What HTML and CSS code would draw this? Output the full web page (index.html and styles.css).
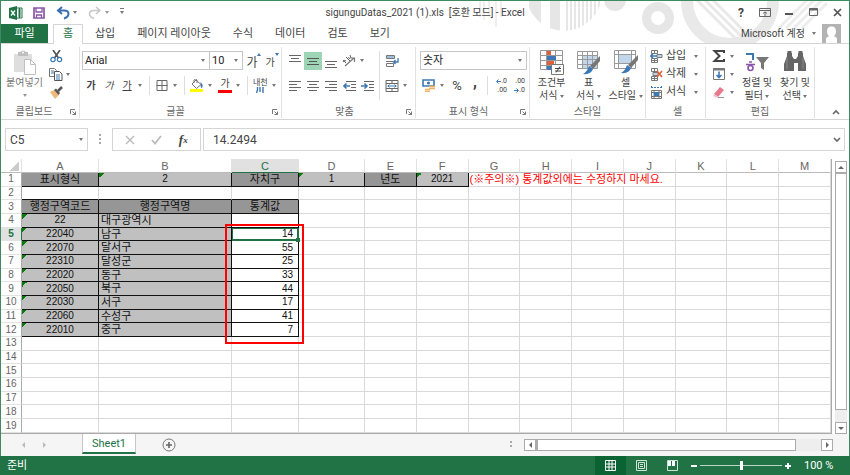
FILE: index.html
```html
<!DOCTYPE html>
<html lang="ko">
<head>
<meta charset="utf-8">
<title>sigunguDatas_2021 (1).xls - Excel</title>
<link rel="stylesheet" href="styles.css">
</head>
<body>
<div class="window">
  <header class="top">
    <svg class="decor" width="370" height="42" viewBox="480 1 370 42" aria-hidden="true">
      <defs>
        <clipPath id="disc"><circle cx="565" cy="-7" r="38"/></clipPath>
        <clipPath id="ring"><circle cx="731" cy="1" r="39"/></clipPath>
      </defs>
      <path d="M481 0v17M485 0v20M490 0v16M497 0v27M502 0v17" stroke="#efefef" stroke-width="2"/>
      <g clip-path="url(#disc)" fill="#e6e6e6"><path d="M530 0h12v40h-12zM551 0h10v40h-10zM567 0h2v40h-2zM571 0h2v40h-2zM575 0h2v40h-2zM579 0h2v40h-2zM583 0h2v40h-2zM587 0h2v40h-2zM591 0h2v40h-2zM595 0h2v40h-2zM599 0h2v40h-2z"/></g>
      <circle cx="616" cy="0" r="11" fill="#e6e6e6"/>
      <circle cx="659" cy="18" r="11.500" fill="none" stroke="#e6e6e6" stroke-width="9"/>
      <circle cx="731" cy="1" r="43" fill="none" stroke="#e9e9e9" stroke-width="12"/>
      <g clip-path="url(#ring)"><path d="M690 -8l60 60M698 -8l60 60M706 -8l60 60" stroke="#e9e9e9" stroke-width="3"/></g>
      <path d="M787 28l28-28M795 28l28-28M803 28l25-25M780 28l28-28" stroke="#ededed" stroke-width="3"/>
    </svg>
    <div class="titlebar">
      <div class="quick">
        <svg width="14" height="14" viewBox="0 0 14 14"><path d="M0 2l8-2v14l-8-2z" fill="#217346"/><path d="M8 2h5v10H8M9 4h3M9 6h3M9 8h3M9 10h3M10.500 2v10" fill="none" stroke="#217346"/><path d="M2 4.500l4 5M6 4.500l-4 5" stroke="#fff" stroke-width="1.300"/></svg>
        <button class="save" aria-label="저장"><svg width="12" height="12" viewBox="0 0 12 12"><path d="M1 1h10v10H1z" fill="#fff" stroke="#8a55a8" stroke-width="1.700"/><path d="M3 1v4h6V1M3.500 11V8h5v3" fill="none" stroke="#8a55a8" stroke-width="1.300"/></svg></button>
        <button class="split" aria-label="실행 취소"><svg width="14" height="14" viewBox="0 0 14 14"><path d="M6 1L2 4.500L6 8M2 4.500h6c6 0 6 6 0 8" fill="none" stroke="#3b6fb0" stroke-width="2"/></svg><i class="caret"></i></button>
        <button class="split off" aria-label="다시 실행"><svg width="14" height="14" viewBox="0 0 14 14"><path d="M8 1l4 3.500L8 8M12 4.500H6c-6 0-6 6 0 8" fill="none" stroke="#b5b5b5" stroke-width="1.500"/></svg><i class="caret"></i></button>
        <button class="custom" aria-label="빠른 실행 도구 모음 사용자 지정"><i class="caret lined"></i></button>
      </div>
      <h1>sigunguDatas_2021 (1).xls&nbsp; [호환 모드] - Excel</h1>
      <div class="winbtns">
        <button aria-label="도움말" class="help">?</button>
        <button aria-label="리본 메뉴 표시 옵션"><svg width="12" height="10" viewBox="0 0 12 10"><path d="M.5.5h11v8H.5zM.5 2.500h11M6 8V4M4 5.500L6 3.800l2 1.700" fill="none" stroke="#666"/></svg></button>
        <button aria-label="최소화"><svg width="8" height="10" viewBox="0 0 8 10"><path d="M0 6h8" stroke="#555" stroke-width="2"/></svg></button>
        <button aria-label="최대화"><svg width="9" height="9" viewBox="0 0 9 9"><path d="M.5.5h8v7h-8z" fill="none" stroke="#666"/><path d="M0 1.500h9" stroke="#666" stroke-width="2"/></svg></button>
        <button aria-label="닫기"><svg width="9" height="9" viewBox="0 0 9 9"><path d="M1 1l7 7M8 1L1 8" stroke="#555" stroke-width="1.700"/></svg></button>
      </div>
    </div>
    <nav class="tabs">
      <a href="#" class="file">파일</a>
      <a href="#" class="active">홈</a>
      <a href="#">삽입</a>
      <a href="#">페이지 레이아웃</a>
      <a href="#">수식</a>
      <a href="#">데이터</a>
      <a href="#">검토</a>
      <a href="#">보기</a>
      <button class="account">Microsoft 계정 <i class="caret"></i></button>
      <svg class="avatar" width="19" height="19" viewBox="0 0 19 19"><path d="M0 0h19v19H0z" fill="#b3b3b3"/><path d="M4 19v-4q0-2 3-2.500q-2-2-2-5q0-5 4.500-5t4.500 5q0 3-2 5q3 .5 3 2.500v4z" fill="#fff"/></svg>
    </nav>
  </header>

  <section class="ribbon" aria-label="홈">
    <div class="group clipboard">
      <div class="body">
        <button class="big off"><svg width="24" height="26" viewBox="0 0 24 26"><path d="M1 4h18v18H1z" fill="#d3d3d3"/><path d="M5 2h2q3-3 6 0h2v4H5z" fill="#aaa"/><circle cx="10" cy="2.500" r="1" fill="#fff"/><path d="M11.500 9.500h6l5 5v10h-11z" fill="#fff" stroke="#aaa"/><path d="M17.500 9.500v5h5" fill="none" stroke="#aaa"/></svg><span>붙여넣기</span><i class="caret"></i></button>
        <div class="stack">
          <button class="ib" aria-label="잘라내기"><svg width="13" height="13" viewBox="0 0 13 13"><path d="M3 0l5.500 8M10 0L4.500 8" stroke="#555" stroke-width="1.700"/><circle cx="3" cy="9.500" r="2.200" fill="none" stroke="#3c78b5" stroke-width="1.200"/><circle cx="9.500" cy="9.500" r="2.200" fill="none" stroke="#3c78b5" stroke-width="1.200"/></svg></button>
          <button class="ib dd" aria-label="복사"><svg width="14" height="13" viewBox="0 0 14 13"><path d="M.5.5h5l2 2v6h-7z" fill="#fff" stroke="#777"/><path d="M5.500 3.500h5l2.500 2.500v6.500H5.500z" fill="#fff" stroke="#555"/><path d="M2 3h3M2 5h3M7 7h4M7 9h4M7 11h4" stroke="#3c78b5"/></svg><i class="caret"></i></button>
          <button class="ib" aria-label="서식 복사"><svg width="13" height="13" viewBox="0 0 13 13"><path d="M0 6l4-2 5 5-4 4z" fill="#f0b878"/><path d="M4 4l2-1.500 4 4.500L8.500 9z" fill="#555"/><path d="M8 5l4-4" stroke="#555" stroke-width="2.500"/></svg></button>
        </div>
      </div>
      <footer>클립보드<svg class="launch" width="6" height="6" viewBox="0 0 6 6"><path d="M.5 5V.5H5M2.500 2.500l3 3M5.500 2.500v3h-3" fill="none" stroke="#777"/></svg></footer>
    </div>

    <div class="group font">
      <div class="body rows">
        <div class="row">
          <span class="combo face"><select aria-label="글꼴"><option>Arial</option></select><i class="caret"></i></span>
          <span class="combo size"><select aria-label="글꼴 크기"><option>10</option></select><i class="caret"></i></span>
          <button class="ib txt" aria-label="글꼴 크기 크게"><span class="ga large">가</span><i class="mark up"></i></button>
          <button class="ib txt" aria-label="글꼴 크기 작게"><span class="ga">가</span><i class="mark"></i></button>
        </div>
        <div class="row">
          <button class="ib" aria-label="굵게"><b>가</b></button>
          <button class="ib" aria-label="기울임꼴"><em>가</em></button>
          <button class="ib dd" aria-label="밑줄"><u>가</u><i class="caret"></i></button>
          <i class="sep"></i>
          <button class="ib dd" aria-label="테두리"><svg width="11" height="11" viewBox="0 0 11 11"><path d="M.5.5h10v10H.5zM5.500 0v11M0 5.500h11" fill="none" stroke="#666"/></svg><i class="caret"></i></button>
          <i class="sep"></i>
          <button class="ib dd" aria-label="채우기 색"><svg width="14" height="14" viewBox="0 0 14 14"><path d="M0 10h13v3H0z" fill="#ff0"/><path d="M2 5l4-4 5 4.500-4.500 4z" fill="#fff" stroke="#777"/><path d="M4 4V1q1.500-2 3 0v3" fill="none" stroke="#777"/><path d="M10 3q4 2 2 6q-2 0-1-4z" fill="#3c78b5"/></svg><i class="caret"></i></button>
          <button class="ib dd" aria-label="글꼴 색"><span class="fontcolor">가</span><i class="caret"></i></button>
          <i class="sep"></i>
          <button class="ib dd" aria-label="윗주 필드"><span class="ruby">내천<svg width="8" height="6" viewBox="0 0 8 6"><path d="M1.500 0v3L.5 6M4 0v5M7 0v6" fill="none" stroke="#3c78b5" stroke-width="1.400"/></svg></span><i class="caret"></i></button>
        </div>
      </div>
      <footer>글꼴<svg class="launch" width="6" height="6" viewBox="0 0 6 6"><path d="M.5 5V.5H5M2.500 2.500l3 3M5.500 2.500v3h-3" fill="none" stroke="#777"/></svg></footer>
    </div>

    <div class="group align">
      <div class="body">
        <div class="rows">
          <div class="row">
            <button class="ib" aria-label="위쪽 맞춤"><svg width="12" height="14" viewBox="0 0 12 14"><path d="M0 1.500h12M2 4.500h8M0 7.500h12" stroke="#666"/></svg></button>
            <button class="ib on" aria-label="가운데 맞춤"><svg width="12" height="14" viewBox="0 0 12 14"><path d="M0 4.500h12M2 7.500h8M0 10.500h12" stroke="#555"/></svg></button>
            <button class="ib" aria-label="아래쪽 맞춤"><svg width="12" height="14" viewBox="0 0 12 14"><path d="M0 7.500h12M2 10.500h8M0 13.500h12" stroke="#666"/></svg></button>
            <button class="ib dd" aria-label="방향"><svg width="14" height="13" viewBox="0 0 14 13"><path d="M3 12l9-8M8.500 4H12.500v4" fill="none" stroke="#777" stroke-width="1.200"/><path d="M1 6l3 3M1 8q1-3 3-1M4 3l4 4M5 5q2-3 3 0M8 1l1 3" fill="none" stroke="#666"/></svg><i class="caret"></i></button>
          </div>
          <div class="row">
            <button class="ib" aria-label="왼쪽 맞춤"><svg width="12" height="10" viewBox="0 0 12 10"><path d="M0 .5h12M0 3.500h8M0 6.500h12M0 9.500h8" stroke="#666"/></svg></button>
            <button class="ib" aria-label="가로 가운데 맞춤"><svg width="12" height="10" viewBox="0 0 12 10"><path d="M0 .5h12M2 3.500h8M0 6.500h12M2 9.500h8" stroke="#666"/></svg></button>
            <button class="ib" aria-label="오른쪽 맞춤"><svg width="12" height="10" viewBox="0 0 12 10"><path d="M0 .5h12M4 3.500h8M0 6.500h12M4 9.500h8" stroke="#666"/></svg></button>
            <button class="ib" aria-label="내어쓰기"><svg width="13" height="10" viewBox="0 0 13 10"><path d="M3 .5h10M8 3.500h5M8 6.500h5M3 9.500h10" stroke="#666"/><path d="M7 5H1M3.500 2.500L1 5l2.500 2.500" fill="none" stroke="#3c78b5" stroke-width="1.600"/></svg></button>
            <button class="ib" aria-label="들여쓰기"><svg width="13" height="10" viewBox="0 0 13 10"><path d="M3 .5h10M8 3.500h5M8 6.500h5M3 9.500h10" stroke="#666"/><path d="M0 5h6M3.500 2.500L6 5L3.500 7.500" fill="none" stroke="#3c78b5" stroke-width="1.600"/></svg></button>
          </div>
        </div>
        <i class="sep"></i>
        <div class="rows">
          <div class="row"><button class="ib" aria-label="텍스트 줄 바꿈"><svg width="13" height="12" viewBox="0 0 13 12"><path d="M.5.5h8v3h-8zM0 6.500h7M.5 8.500h7v3h-7z" fill="none" stroke="#777"/><path d="M1 2h7" stroke="#3c78b5"/><path d="M12 3v4H7.500M9.500 5l-2 2 2 2" fill="none" stroke="#3c78b5" stroke-width="1.300"/></svg></button></div>
          <div class="row"><button class="ib dd" aria-label="병합하고 가운데 맞춤"><svg width="13" height="12" viewBox="0 0 13 12"><path d="M.5.500h12v11H.5zM.5 3.500h12M.5 8.500h12M6.500 0v3M6.500 9v3" fill="none" stroke="#666"/><path d="M2 6h9M4 4.500L2.500 6L4 7.500M9 4.500L10.500 6L9 7.500" fill="none" stroke="#3c78b5"/></svg><i class="caret"></i></button></div>
        </div>
      </div>
      <footer>맞춤<svg class="launch" width="6" height="6" viewBox="0 0 6 6"><path d="M.5 5V.5H5M2.500 2.500l3 3M5.500 2.500v3h-3" fill="none" stroke="#777"/></svg></footer>
    </div>

    <div class="group number">
      <div class="body rows">
        <div class="row"><span class="combo format"><select aria-label="표시 형식"><option>숫자</option></select><i class="caret"></i></span></div>
        <div class="row">
          <button class="ib dd" aria-label="회계 표시 형식"><svg width="14" height="13" viewBox="0 0 14 13"><path d="M1 1h11v6H1z" fill="#fff" stroke="#3c78b5" stroke-width="1.600"/><circle cx="6.500" cy="4" r="1.600" fill="#3c78b5"/><path d="M7 7.500h6M7 9.500h6M3 10.500h5M3 12.500h5" stroke="#eeb062" stroke-width="1.500"/></svg><i class="caret"></i></button>
          <button class="ib percent" aria-label="백분율 스타일">%</button>
          <button class="ib comma" aria-label="쉼표 스타일">,</button>
          <i class="sep"></i>
          <button class="ib dec" aria-label="자릿수 늘림"><span><svg width="5" height="5" viewBox="0 0 5 5"><path d="M5 2.500H1M2.500.5l-2 2 2 2" fill="none" stroke="#3c78b5"/></svg>.0</span><span>.00</span></button>
          <button class="ib dec" aria-label="자릿수 줄임"><span>.00</span><span><svg width="5" height="5" viewBox="0 0 5 5"><path d="M0 2.500h4M2.500.5l2 2-2 2" fill="none" stroke="#3c78b5"/></svg>.0</span></button>
        </div>
      </div>
      <footer>표시 형식<svg class="launch" width="6" height="6" viewBox="0 0 6 6"><path d="M.5 5V.5H5M2.500 2.500l3 3M5.500 2.500v3h-3" fill="none" stroke="#777"/></svg></footer>
    </div>

    <div class="group styles">
      <div class="body">
        <button class="big"><svg width="26" height="26" viewBox="0 0 26 26"><path d="M1.500.5h22v19h-22zM1.500 5.500h22M1.500 10.500h22M1.500 15.500h22M7.500 0v20M16.500 0v20" fill="#fff" stroke="#999"/><path d="M8 1h4v4H8zM8 11h7v4H8z" fill="#e0603a"/><path d="M8 6h9v4H8zM8 16h4v4H8z" fill="#3c78b5"/><path d="M12.500 14.500h12v10h-12z" fill="#fff" stroke="#777"/><path d="M16 18.500h6M16 21h6M21 16.500l-4 6" stroke="#444"/></svg><span>조건부<br>서식 <i class="caret"></i></span></button>
        <button class="big"><svg width="26" height="26" viewBox="0 0 26 26"><path d="M1.500 1.500h20v17h-20z" fill="#fff" stroke="#999"/><path d="M7 6h14v12H7z" fill="#c3d7ec"/><path d="M1.500 5.500h20M1.500 9.500h20M1.500 14.500h20M6.500 1v17M11.500 1v17M16.500 1v17" stroke="#999"/><path d="M24 6v5l-7 8-3-3z" fill="#777"/><path d="M13 16l4 3q-2 6-10 5q4-2 6-8z" fill="#3c78b5"/></svg><span>표<br>서식 <i class="caret"></i></span></button>
        <button class="big"><svg width="26" height="26" viewBox="0 0 26 26"><path d="M1.500.5h21v18h-21z" fill="#fff" stroke="#999"/><path d="M1.500 4.500h21M1.500 13.500h21M5.500 0v18M18.500 0v18" stroke="#999"/><path d="M6 5h12v8H6z" fill="#c3d7ec"/><path d="M25 5v5l-7 8-3-3z" fill="#777"/><path d="M14 15l4 3q-2 6-10 5q4-2 6-8z" fill="#3c78b5"/></svg><span>셀<br>스타일 <i class="caret"></i></span></button>
      </div>
      <footer>스타일</footer>
    </div>

    <div class="group cells">
      <div class="body stack">
        <button class="line"><svg width="13" height="13" viewBox="0 0 13 13"><path d="M1.500.5h6v3h-6zM4.500 0v3M1.500 8.500h6v4h-6zM4.500 8v5M1 10.500h7" fill="none" stroke="#777"/><path d="M7 4.500h5v3H7z" fill="#c3d7ec" stroke="#777"/><path d="M7 6H1M3 3.500L.800 6L3 8.500" fill="none" stroke="#3c78b5" stroke-width="1.600"/></svg><span>삽입</span><i class="caret"></i></button>
        <button class="line"><svg width="13" height="13" viewBox="0 0 13 13"><path d="M1.500.5h6v3h-6zM4.500 0v3M1.500 8.500h6v4h-6zM4.500 8v5M1 10.500h7" fill="none" stroke="#777"/><path d="M3 4.500h5v3H3z" fill="#c3d7ec" stroke="#777"/><path d="M7 3l5 6M12 3L7 9" stroke="#e0603a" stroke-width="1.600"/></svg><span>삭제</span><i class="caret"></i></button>
        <button class="line"><svg width="13" height="13" viewBox="0 0 13 13"><path d="M1 1.500h11M1.500 0v3M11.500 0v3" stroke="#3c78b5" stroke-dasharray="2 1"/><path d="M1.500 4.500h10v8h-10zM1 6.500h11M1 10.500h11M4 4v9M9 4v9" fill="none" stroke="#777"/><path d="M4 6h5v4H4z" fill="#3c78b5"/></svg><span>서식</span><i class="caret"></i></button>
      </div>
      <footer>셀</footer>
    </div>

    <div class="group edit">
      <div class="body">
        <div class="stack">
          <button class="ib dd" aria-label="자동 합계"><svg width="14" height="12" viewBox="0 0 14 12"><path d="M12 3V1H2.500l5 5-5 5H12V9" fill="none" stroke="#444" stroke-width="2"/></svg><i class="caret"></i></button>
          <button class="ib dd" aria-label="채우기"><svg width="12" height="12" viewBox="0 0 12 12"><path d="M.5.5h11v11H.5z" fill="#fff" stroke="#777"/><path d="M0 1.500h12" stroke="#777" stroke-width="2"/><path d="M6 3.500v6M3.500 7L6 9.500L8.500 7" fill="none" stroke="#3c78b5" stroke-width="1.600"/></svg><i class="caret"></i></button>
          <button class="ib dd" aria-label="지우기"><svg width="12" height="12" viewBox="0 0 12 12"><path d="M1 8l6-7 4 3-6 7z" fill="#e8788c"/><path d="M1 8l4 3-1 1-4-2z" fill="#f4c0ca"/><path d="M5 11.500h6" stroke="#999"/></svg><i class="caret"></i></button>
        </div>
        <button class="big"><svg width="24" height="26" viewBox="0 0 24 26"><path d="M1 4h7v6" fill="none" stroke="#3c78b5" stroke-width="2"/><path d="M1 14.500h9M4 12h3" stroke="#8a55a8" stroke-width="1.600"/><circle cx="5.500" cy="18" r="2.500" fill="none" stroke="#8a55a8" stroke-width="1.600"/><path d="M11 7h13l-5 6v7l-3-2v-5z" fill="#777"/></svg><span>정렬 및<br>필터 <i class="caret"></i></span></button>
        <button class="big"><svg width="22" height="26" viewBox="0 0 22 26"><path d="M3 6V3h5v3l2 3h2l2-3V3h5v3l3 8v7h-8v-8h-4v8H0v-7z" fill="#666"/><path d="M4.500 3V2h2v1M15.500 3V2h2v1M9.500 10h3" stroke="#666" stroke-width="2" fill="none"/><path d="M3 8v11M19 8v11" stroke="#888"/></svg><span>찾기 및<br>선택 <i class="caret"></i></span></button>
      </div>
      <footer>편집</footer>
    </div>
    <button class="collapse" aria-label="리본 메뉴 축소"><svg width="8" height="6" viewBox="0 0 8 6"><path d="M1 5l3-3 3 3" fill="none" stroke="#666" stroke-width="1.600"/></svg></button>
  </section>

  <section class="formula">
    <div class="namebox"><input aria-label="이름 상자" value="C5"><i class="caret"></i></div>
    <i class="dots"></i>
    <div class="fx">
      <button aria-label="취소"><svg width="10" height="10" viewBox="0 0 10 10"><path d="M1 1l8 8M9 1L1 9" stroke="#bbb" stroke-width="1.400"/></svg></button>
      <button aria-label="입력"><svg width="11" height="10" viewBox="0 0 11 10"><path d="M1 5l3 3.500L10 1" fill="none" stroke="#bbb" stroke-width="1.800"/></svg></button>
      <button aria-label="함수 삽입" class="fn">f<small>x</small></button>
    </div>
    <div class="value"><input aria-label="수식 입력줄" value="14.2494"><svg width="8" height="6" viewBox="0 0 8 6"><path d="M1 1l3 3 3-3" fill="none" stroke="#666" stroke-width="1.600"/></svg></div>
  </section>

  <main class="sheet">
    <div class="gridwrap">
      <table class="grid">
        <colgroup><col class="c-row"><col class="c-a"><col class="c-b"><col class="c-c"><col class="c-d"><col><col><col><col><col><col><col><col><col></colgroup>
        <thead><tr id="letters"></tr></thead>
        <tbody id="cells"></tbody>
      </table>
    </div>
    <div class="vscroll"><button aria-label="위로"><i class="tri up"></i></button><div class="thumb"></div><div class="track"></div><button aria-label="아래로"><i class="tri down"></i></button></div>
  </main>

  <div class="sheetbar">
    <div class="sheetnav"><button aria-label="이전 시트"><i class="tri left"></i></button><button aria-label="다음 시트"><i class="tri right"></i></button></div>
    <a href="#" class="sheettab">Sheet1</a>
    <button class="add" aria-label="새 시트"><svg width="14" height="14" viewBox="0 0 14 14"><circle cx="7" cy="7" r="6" fill="none" stroke="#777"/><path d="M7 4v6M4 7h6" stroke="#666" stroke-width="1.600"/></svg></button>
    <i class="dots"></i>
    <div class="hscroll"><button aria-label="왼쪽으로"><i class="tri left"></i></button><div class="thumb"></div><div class="track"></div><button aria-label="오른쪽으로"><i class="tri right"></i></button></div>
  </div>

  <footer class="status">
    <span class="ready">준비</span>
    <button class="view on" aria-label="기본"><svg width="11" height="11" viewBox="0 0 11 11"><path d="M.5.5h10v10H.5zM4 0v11M7 0v11M0 4h11M0 7h11" fill="none" stroke="#fff"/></svg></button>
    <button class="view" aria-label="페이지 레이아웃"><svg width="11" height="11" viewBox="0 0 11 11"><path d="M.5.5h10v10H.5zM2.500 2.500h6v6h-6zM4 4.500h3M4 6.500h3" fill="none" stroke="#cfe3d7"/></svg></button>
    <button class="view" aria-label="페이지 나누기 미리 보기"><svg width="11" height="11" viewBox="0 0 11 11"><path d="M.5.5h10v10H.5z" fill="none" stroke="#cfe3d7"/><path d="M1 1h3v5H1zM5 1h3v5H5z" fill="#fff"/></svg></button>
    <button class="zoom" aria-label="축소"><svg width="6" height="8" viewBox="0 0 6 8"><path d="M0 4h6" stroke="#fff" stroke-width="2"/></svg></button>
    <input type="range" min="0" max="100" value="50" aria-label="확대/축소">
    <button class="zoom" aria-label="확대"><svg width="8" height="8" viewBox="0 0 8 8"><path d="M1 4h6M4 1v6" stroke="#fff" stroke-width="2"/></svg></button>
    <span class="pct">100 %</span>
  </footer>
</div>
<script src="grid.js"></script>
</body>
</html>
```
FILE: grid.js
```js
const letters = 'ABCDEFGHIJKLM'.split('');
const regions = [
  ['22', '대구광역시', ''], ['22040', '남구', '14'], ['22070', '달서구', '55'],
  ['22310', '달성군', '25'], ['22020', '동구', '33'], ['22050', '북구', '44'],
  ['22030', '서구', '17'], ['22060', '수성구', '41'], ['22010', '중구', '7']
];
const cells = {
  A1: ['표시형식', 'head'], B1: ['2', 'fill flag'], C1: ['자치구', 'head'],
  D1: ['1', 'fill flag'], E1: ['년도', 'head'], F1: ['2021', 'fill flag'],
  G1: ['(※주의※) 통계값외에는 수정하지 마세요.', 'note'],
  A2: ['', 'under'], B2: ['', 'under'], C2: ['', 'under'],
  A3: ['행정구역코드', 'head'], B3: ['행정구역명', 'head'], C3: ['통계값', 'head']
};
regions.forEach(([code, name, value], i) => {
  const r = i + 4;
  cells['A' + r] = [code, 'fill flag'];
  cells['B' + r] = [name, 'fill name'];
  cells['C' + r] = [value, 'num'];
});
cells.C5[1] += ' selected';

const headRow = document.getElementById('letters');
headRow.innerHTML = '<th class="corner"></th>' + letters.map(l =>
  `<th scope="col"${l === 'C' ? ' class="current"' : ''}>${l}</th>`).join('');

let html = '';
for (let r = 1; r <= 19; r++) {
  html += `<tr><th scope="row"${r === 5 ? ' class="current"' : ''}>${r}</th>`;
  for (let c = 0; c < letters.length; c++) {
    const key = letters[c] + r;
    const [text, cls] = cells[key] || ['', ''];
    if (key === 'G1') {
      html += `<td class="${cls}" colspan="4">${text}</td>`;
      c += 3;
    } else {
      const extra = key === 'C5' ? '<i class="handle"></i><i class="callout"></i>' : '';
      html += `<td${cls ? ` class="${cls}"` : ''}>${text}${extra}</td>`;
    }
  }
  html += '</tr>';
}
document.getElementById('cells').innerHTML = html;
```
FILE: styles.css
```css
* { box-sizing: border-box; }
html, body { height: 100%; margin: 0; }
body { font: 11px/14px Roboto, "Noto Sans CJK KR", sans-serif; color: #444; background: #fff; }
button, input, select { font: inherit; color: inherit; background: none; border: 0; padding: 0; margin: 0; border-radius: 0; }
a { color: inherit; text-decoration: none; }
svg { display: block; flex: none; }
i { font-style: normal; }

.window { min-height: 100vh; display: flex; flex-direction: column; border: 1px solid #3f8a61; border-bottom: 0; position: relative; }

.caret { display: inline-block; flex: none; border: 2px solid transparent; border-top: 3px solid #777; border-bottom: 0; width: 4px; height: 3px; vertical-align: middle; }
.caret.lined { position: relative; }
.caret.lined::before { content: ""; position: absolute; left: -2px; top: -6px; width: 4px; height: 1px; background: #777; }
.sep { width: 7px; align-self: stretch; background: linear-gradient(#ddd, #ddd) center / 1px 100% no-repeat; flex: none; }

/* title bar and tabs */
.top { position: relative; }
.decor { position: absolute; right: 0; top: 0; }
.titlebar { position: relative; height: 23px; display: grid; grid-template-columns: 1fr auto 1fr; align-items: center; }
.titlebar h1 { margin: 0; font-size: 10px; font-weight: 400; }
.quick { display: flex; align-items: center; padding-left: 8px; }
.quick button { display: flex; align-items: center; height: 20px; }
.quick .save { margin-left: 10px; }
.quick .split { margin-left: 11px; gap: 3px; }
.quick .custom { margin-left: 11px; }
.off { opacity: .75; }
.winbtns { display: flex; justify-content: flex-end; }
.winbtns button { width: 24px; height: 22px; display: flex; align-items: center; justify-content: center; }
.winbtns .help { font-weight: 700; font-size: 12px; }

.tabs { position: relative; display: flex; height: 20px; border-bottom: 1px solid #d5d5d5; }
.tabs a { padding: 3px 11px; height: 19px; }
.tabs .file { background: #217346; color: #fff; width: 47px; padding: 3px 0; text-align: center; margin-right: 5px; }
.tabs .active { color: #217346; border: 1px solid #d5d5d5; border-bottom: 0; background: #fff; height: 20px; width: 30px; padding: 2px 0; text-align: center; margin-right: 1px; }
.account { margin-left: auto; display: flex; align-items: center; gap: 7px; margin-right: 6px; font-size: 10px; }
.avatar { margin-right: 8px; }

/* ribbon */
.ribbon { display: flex; height: 76px; padding: 3px 0 1px; border-bottom: 1px solid #d5d5d5; font-size: 10px; position: relative; }
.group { display: flex; flex-direction: column; border-right: 1px solid #e1e1e1; flex: none; }
.group .body { flex: 1; display: flex; min-height: 0; }
.group footer { height: 13px; line-height: 13px; text-align: center; color: #666; position: relative; padding-right: 12px; flex: none; }
.launch { position: absolute; right: 3px; bottom: 3px; }
.rows, .group .body.rows { display: flex; flex-direction: column; gap: 6px; padding-top: 4px; }
.row { display: flex; height: 19px; align-items: center; flex: none; }
.stack, .group .body.stack { display: flex; flex-direction: column; padding-top: 0; }
.ib { width: 18px; height: 18px; display: flex; align-items: center; justify-content: center; flex: none; position: relative; }
.ib.dd { width: 28px; justify-content: flex-start; padding-left: 2px; gap: 6px; }
.ib.dd svg, .ib.dd > :first-child { min-width: 14px; text-align: center; }
.ib.dd .caret { margin-left: -2px; }
.ib.on { background: #9fd5b7; }
.ib em { font-style: italic; }
.ib b { font-weight: 700; }
.big { display: flex; flex-direction: column; align-items: center; line-height: 13px; text-align: center; padding-top: 3px; white-space: nowrap; align-self: flex-start; }
.big > .caret { margin-top: 5px; }

.clipboard { width: 79px; }
.clipboard .big { width: 41px; margin-left: 3px; margin-right: 2px; }
.clipboard .ib.dd { width: 28px; gap: 5px; }
.clipboard .ib { width: 18px; }

.font { width: 202px; padding-left: 2px; }
.combo { display: flex; align-items: center; border: 1px solid #c6c6c6; height: 19px; padding-right: 4px; }
.combo select { appearance: none; flex: 1; min-width: 0; height: 17px; padding-left: 2px; color: #222; font-size: 11px; line-height: 17px; }
.face { width: 128px; }
.size { width: 33px; border-left: 0; }
.font .txt { align-items: flex-end; }
.ga { font-size: 10px; }
.ga.large { font-size: 12px; }
.mark { position: absolute; right: 0; top: 1px; border: 2px solid transparent; border-top: 3px solid #3c78b5; border-bottom: 0; }
.mark.up { border-top: 0; border-bottom: 3px solid #3c78b5; }
.fontcolor { line-height: 12px; border-bottom: 3px solid #f00; }
.ruby { font-size: 8px; line-height: 8px; display: flex; flex-direction: column; align-items: center; }
.ib.dd .ruby svg { min-width: 0; }

.align { width: 134px; padding-left: 4px; }
.align .sep { margin-top: 4px; margin-bottom: 5px; }
.number { width: 114px; padding-left: 4px; }
.format { width: 107px; }
.percent { font-size: 13px; }
.comma { font-size: 16px; font-weight: 700; padding-bottom: 8px; }
.dec { flex-direction: column; font-size: 7px; line-height: 9px; }
.dec span { width: 14px; display: flex; align-items: center; justify-content: flex-end; }
.styles { width: 116px; }
.styles .big { flex: 1 1 33%; }
.styles .body { padding: 0 1px 0 3px; }
.styles footer, .cells footer { padding-right: 0; }
.cells { width: 60px; padding-left: 4px; }
.line { display: flex; align-items: center; height: 18px; gap: 3px; font-size: 11px; }
.line .caret { margin-left: auto; margin-right: 7px; }
.edit { width: 109px; }
.edit .body { padding-left: 4px; }
.edit .big { width: 38px; }
.edit footer { padding-right: 0; }
.collapse { margin-left: auto; align-self: flex-end; padding: 0 9px 3px; }

/* formula bar */
.formula { display: flex; padding: 8px 4px; height: 39px; font-size: 12px; align-items: stretch; }
.namebox, .fx, .value { border: 1px solid #d5d5d5; display: flex; align-items: center; }
.namebox { width: 83px; padding: 0 4px; }
.namebox input { width: 100%; }
.formula .dots { margin: 6px 11px; }
.dots { width: 2px; background: repeating-linear-gradient(#aaa 0 2px, transparent 2px 4px); flex: none; }
.fx { width: 89px; justify-content: space-evenly; }
.fx button { width: 20px; display: flex; justify-content: center; align-items: center; }
.fx .fn { font: italic 700 13px/14px "Liberation Serif", serif; }
.fn small { font-size: 9px; }
.value { flex: 1; margin-left: 2px; padding: 0 3px 0 9px; }
.value input { flex: 1; min-width: 0; }

/* worksheet */
.sheet { flex: 1; display: flex; }
.gridwrap { flex: 1; display: flex; border-right: 1px solid #aaa; border-bottom: 1px solid #aaa; }
.grid { width: 100%; height: 100%; table-layout: fixed; border-collapse: separate; border-spacing: 0; font: 10px/12px "Liberation Sans", "Noto Sans CJK KR", sans-serif; color: #111; }
.c-row { width: 21px; }
.c-a { width: 77px; }
.c-b { width: 133px; }
.c-c { width: 67px; }
.c-d { width: 66px; }
.grid th, .grid td { padding: 0; height: 13px; border-right: 1px solid #d9d9d9; border-bottom: 1px solid #d9d9d9; white-space: nowrap; text-align: center; }
.grid th { font-weight: 400; color: #666; }
.grid thead th { height: 14px; font-size: 11px; border-right-color: #e2e2e2; border-bottom-color: #bbb; }
.grid tbody th { border-right-color: #aaa; border-bottom-color: #e2e2e2; }
.grid thead .corner { background: linear-gradient(135deg, transparent 50%, #ccc 50%) right 2px bottom 1px / 9px 9px no-repeat; }
.grid th.current { color: #217346; background: #e1e1e1; }
.grid tbody th.current { font-weight: 700; border-right-color: #217346; }
.grid thead th.current { border-bottom-color: #217346; }
.grid .head { background: #969696; border-color: #111; font-size: 11px; line-height: 11px; }
.grid .fill { background-color: #c0c0c0; border-color: #111; }
.grid .flag { background-image: linear-gradient(135deg, #0a7a0a 50%, transparent 50%); background-size: 5px 5px; background-repeat: no-repeat; }
.grid .under { border-bottom-color: #111; }
.grid .name { text-align: left; padding-left: 2px; font-size: 11px; line-height: 11px; }
.grid .num { text-align: right; padding-right: 5px; border-color: #111; }
.grid .note { color: #f00; text-align: left; font-size: 11px; padding-left: 1px; line-height: 11px; }
.grid .selected { position: relative; box-shadow: inset 0 0 0 1px #217346; border-color: #217346; }
.handle { position: absolute; right: -2px; bottom: -2px; width: 4px; height: 4px; background: #217346; }
.callout { position: absolute; left: -7px; top: -4px; width: 79px; height: 120px; border: 2px solid #f00; z-index: 1; pointer-events: none; }

.tri { border: 3px solid transparent; display: block; }
.tri.up { border-bottom-color: #666; border-top: 0; }
.tri.down { border-top-color: #666; border-bottom: 0; }
.tri.left { border-right-color: #666; border-left: 0; }
.tri.right { border-left-color: #666; border-right: 0; }
.vscroll, .hscroll { display: flex; }
.vscroll { flex-direction: column; width: 12px; margin: 2px 2px 0 3px; }
.vscroll button, .hscroll button { width: 12px; height: 12px; border: 1px solid #ababab; background: #fff; display: flex; align-items: center; justify-content: center; flex: none; }
.thumb { background: #fff; border: 1px solid #ababab; }
.track { background: #eee; }
.vscroll .thumb { flex: 95; }
.vscroll .track { flex: 5; }
.hscroll .thumb { flex: 91; border-left-width: 2px; }
.hscroll .track { flex: 9; }

.sheetbar { display: flex; align-items: center; height: 22px; background: #f5f5f5; }
.sheetnav { width: 81px; display: flex; gap: 18px; padding-left: 21px; opacity: .4; }
.sheettab { align-self: flex-start; width: 54px; height: 20px; background: #fff; border: 1px solid #c6c6c6; border-top: 0; border-bottom: 2px solid #217346; color: #217346; text-align: center; line-height: 19px; }
.add { margin-left: 26px; }
.sheetbar .dots { margin-left: auto; height: 8px; margin-right: 12px; }
.hscroll { width: 309px; margin-right: 16px; }

.status { display: flex; align-items: center; height: 19px; margin: 0 -1px; background: #217346; color: #fff; }
.ready { margin: 0 auto 0 7px; }
.view { width: 31px; height: 19px; display: flex; align-items: center; justify-content: center; }
.view.on { background: #0a6332; }
.zoom { width: 12px; display: flex; justify-content: center; }
.status input { appearance: none; width: 82px; height: 12px; background: linear-gradient(#b9d5c5, #b9d5c5) center / 100% 1px no-repeat; }
.status input::-webkit-slider-thumb { appearance: none; width: 3px; height: 9px; background: #fff; }
.pct { width: 56px; padding-left: 10px; }
```
